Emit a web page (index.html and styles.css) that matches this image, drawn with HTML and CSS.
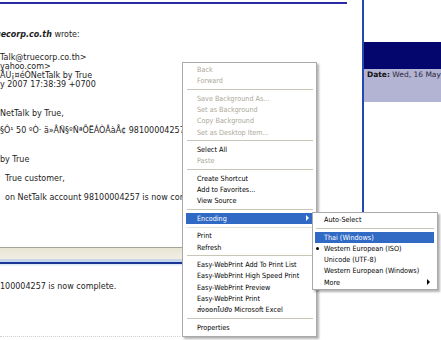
FILE: index.html
```html
<!DOCTYPE html>
<html>
<head>
<meta charset="utf-8">
<link rel="stylesheet" href="styles.css">
</head>
<body>
<div class="page">
  <div class="mail">
    <div class="rule-top"></div>
    <div class="ln l-wrote"><b><i>uecorp.co.th</i></b> wrote:</div>
    <div class="ln l-head">Talk@truecorp.co.th&gt;</div>
    <div class="ln">yahoo.com&gt;</div>
    <div class="ln">ÅÙ¡¤éÒNetTalk by True</div>
    <div class="ln">y 2007 17:38:39 +0700</div>
    <div class="ln l-p1">NetTalk by True,</div>
    <div class="ln l-p2">§Ô¹ 50 ºÒ· ä»ÂÑ§ºÑ­ªÕËÁÒÂàÅ¢ 98100004257 àÃÕÂºÃéÍÂáÅéÇ</div>
    <div class="ln l-p3">by True</div>
    <div class="ln l-p4 ind">True customer,</div>
    <div class="ln l-p4 ind">on NetTalk account 98100004257 is now complete.</div>
    <div class="bar"></div>
    <div class="ln l-done">100004257 is now complete.</div>
    <div class="dots"></div>
  </div>
  <div class="side">
    <div class="side-head"></div>
    <div class="side-meta"><b>Date:</b> Wed, 16 May 2007</div>
  </div>

  <div class="menu main-menu">
    <div class="mi off">Back</div>
    <div class="mi off">Forward</div>
    <div class="sep"></div>
    <div class="mi off">Save Background As...</div>
    <div class="mi off">Set as Background</div>
    <div class="mi off">Copy Background</div>
    <div class="mi off">Set as Desktop Item...</div>
    <div class="sep"></div>
    <div class="mi">Select All</div>
    <div class="mi off">Paste</div>
    <div class="sep"></div>
    <div class="mi">Create Shortcut</div>
    <div class="mi">Add to Favorites...</div>
    <div class="mi">View Source</div>
    <div class="sep"></div>
    <div class="mi hot">Encoding<span class="arrow"></span></div>
    <div class="sep faint"></div>
    <div class="mi">Print</div>
    <div class="mi">Refresh</div>
    <div class="sep"></div>
    <div class="mi">Easy-WebPrint Add To Print List</div>
    <div class="mi">Easy-WebPrint High Speed Print</div>
    <div class="mi">Easy-WebPrint Preview</div>
    <div class="mi">Easy-WebPrint Print</div>
    <div class="mi">ส่งออกไปยัง Microsoft Excel</div>
    <div class="sep"></div>
    <div class="mi">Properties</div>
  </div>

  <div class="menu sub-menu">
    <div class="mi"><span class="chk"></span>Auto-Select</div>
    <div class="sep"></div>
    <div class="mi hot"><span class="chk"></span>Thai (Windows)</div>
    <div class="mi"><span class="chk"><span class="dot"></span></span>Western European (ISO)</div>
    <div class="mi"><span class="chk"></span>Unicode (UTF-8)</div>
    <div class="mi"><span class="chk"></span>Western European (Windows)</div>
    <div class="mi"><span class="chk"></span>More<span class="arrow"></span></div>
  </div>
</div>
</body>
</html>
```

FILE: styles.css
```css
* { box-sizing: border-box; }
html, body { margin: 0; padding: 0; background: #fff; }
body { width: 441px; height: 340px; overflow: hidden; }

.page {
  position: relative;
  display: flex;
  width: 441px;
  height: 340px;
  overflow: hidden;
  font-family: "DejaVu Sans", Verdana, sans-serif;
  color: #1c1c1c;
}

/* message pane */
.mail { width: 362px; flex: none; overflow: hidden; font-size: 8px; }
.rule-top { margin-top: 2px; width: 347px; height: 2px; background: #2b2ba8; }
.ln { height: 9px; line-height: 9px; white-space: nowrap; }
.l-wrote { margin-top: 25.5px; text-indent: -5px; }
.l-head { margin-top: 14px; }
.l-p1 { margin-top: 20.3px; }
.l-p2 { margin-top: 8.4px; }
.l-p3 { margin-top: 19.6px; }
.l-p4 { margin-top: 10px; }
.ind { padding-left: 5px; }
.bar {
  margin-top: 44.9px;
  height: 19px;
  border-top: 1px solid #a5a396;
  background: linear-gradient(to bottom,
    #e8e5d6 0, #f1eee4 11.5px,
    #c9d5ea 11.5px, #c9d5ea 14px,
    #1b3596 14px, #1b3596 16px,
    #dbe4f4 16px, #f4f7fc 18px);
}
.l-done { margin-top: 16.3px; }
.dots { margin-top: 45px; width: 180px; border-top: 1px dotted #cfcfcf; }

/* side pane */
.side { width: 79px; flex: none; height: 270px; border-left: 2px solid #2447b2; padding-top: 42px; }
.side-head { height: 26.5px; background: #05056e; }
.side-meta {
  height: 33px;
  background: #b3b3d3;
  font-size: 7.5px;
  line-height: 9px;
  padding: 1px 0 0 3px;
  white-space: nowrap;
  color: #2a2a3a;
}
.side-meta b { color: #111; }

/* context menus */
.menu {
  position: absolute;
  background: #fff;
  border: 1px solid #a9a9a9;
  box-shadow: 2px 2px 2px rgba(0, 0, 0, 0.3);
  font-family: "DejaVu Sans Condensed", "DejaVu Sans", "Noto Sans Thai", sans-serif;
  font-stretch: condensed;
  font-size: 7.2px;
  color: #000;
}
.main-menu { left: 182px; top: 62px; width: 135px; padding: 1px 3px 3px 3px; }
.sub-menu { left: 312px; top: 212px; width: 126px; padding: 1px 3px 1px 2px; }
.mi {
  display: flex;
  align-items: center;
  height: 11.25px;
  white-space: nowrap;
}
.main-menu .mi { padding-left: 11px; }
.mi.off { color: #aca899; }
.mi.hot { background: #316ac5; color: #fff; }
.sep { height: 6.28px; display: flex; align-items: center; padding: 0 0 0 1px; }
.sep::before { content: ""; flex: 1; height: 1px; background: #c9c6b8; }
.sep.faint::before { background: #e4e2d8; }
.arrow {
  margin-left: auto;
  margin-right: 4px;
  width: 0;
  height: 0;
  border-left: 3px solid currentColor;
  border-top: 3px solid transparent;
  border-bottom: 3px solid transparent;
}
.chk { width: 9px; flex: none; display: flex; align-items: center; }
.dot { width: 3px; height: 3px; border-radius: 50%; background: #000; margin-left: 1px; }
```
